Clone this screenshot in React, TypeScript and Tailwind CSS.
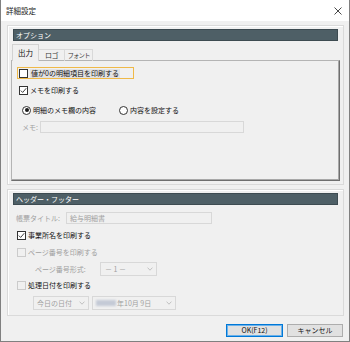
import React from 'react'

const Check = ({ checked = false, disabled = false }: { checked?: boolean; disabled?: boolean }) => (
  <span
    className={`w-[9px] h-[9px] border flex items-center justify-center shrink-0 ${
      disabled ? 'border-[#cbcbcb] bg-[#f0f0f0]' : 'border-[#333333] bg-white'
    }`}
  >
    {checked && (
      <svg viewBox="0 0 9 9" className="w-[7px] h-[7px]">
        <path d="M1 4.6 L3.4 7 L8 1.6" stroke="#222" fill="none" strokeWidth="1.1" />
      </svg>
    )}
  </span>
)

const Radio = ({ checked = false }: { checked?: boolean }) => (
  <span className="w-[9px] h-[9px] rounded-full border border-[#333333] bg-white flex items-center justify-center shrink-0">
    {checked && <span className="w-[4px] h-[4px] rounded-full bg-[#1a1a1a]" />}
  </span>
)

const Chevron = () => (
  <svg viewBox="0 0 7 5" className="w-[6px] h-[4px] shrink-0">
    <path d="M0.5 0.8 L3.5 4 L6.5 0.8" stroke="#b0b0b0" fill="none" strokeWidth="0.9" />
  </svg>
)

const Header = ({ title }: { title: string }) => (
  <div className="mx-[2px] h-[12px] bg-[#4e5f66] border border-[#3d4b51] flex items-center pl-[2px] text-white text-[7px] whitespace-nowrap">
    {title}
  </div>
)

export default function App() {
  return (
    <div className="w-[350px] h-[342px] flex flex-col bg-[#f0f0f0] border-x border-b border-[#808080] font-['Noto_Sans_CJK_JP','Noto_Sans',sans-serif] text-[7px] leading-none text-[#111] whitespace-nowrap overflow-hidden">
      {/* title bar */}
      <div className="h-[21px] bg-white flex items-center justify-between pl-[5px] pr-[7px] shrink-0">
        <span className="text-[7.5px] text-[#222]">詳細設定</span>
        <svg viewBox="0 0 8 8" className="w-[8px] h-[8px]">
          <path d="M0.5 0.5 L7.5 7.5 M7.5 0.5 L0.5 7.5" stroke="#333" strokeWidth="0.9" />
        </svg>
      </div>

      {/* options panel */}
      <div className="mt-[4px] ml-[6px] mr-[5px] h-[160px] border border-[#dadada] shadow-[inset_1px_1px_0_#ffffff] px-[3px] pt-[3px] flex flex-col">
        <Header title="オプション" />

        <div className="mt-[3px] ml-[1px] flex items-end relative z-10 -mb-[1px]">
          <div className="w-[27px] h-[17px] shrink-0 bg-[#f0f0f0] border border-b-0 border-[#d2d2d2] flex items-center justify-center text-[7.5px]">
            出力
          </div>
          <div className="w-[26px] h-[12px] shrink-0 border border-b-0 border-l-0 border-[#d9d9d9] flex items-center justify-center text-[#3a3a3a] tracking-[-0.5px]">
            ロゴ
          </div>
          <div className="w-[28px] h-[12px] shrink-0 border border-b-0 border-l-0 border-[#d9d9d9] flex items-center justify-center text-[#3a3a3a] text-[6.5px] tracking-[-1px]">
            フォント
          </div>
        </div>

        <div className="h-[121px] border border-[#b4b4b4] border-r-[#6e6e6e] border-b-[#6e6e6e] shadow-[inset_-1px_-1px_0_#a8a8a8] flex flex-col">
          <div className="mt-[6px] ml-[5px] w-[117px] h-[12px] border border-[#efb948] flex items-center pl-[1px] gap-[2px]">
            <Check />
            <span className="bg-[#e2e2e2] px-[1px] py-[1px]">値が0の明細項目を印刷する</span>
          </div>
          <div className="mt-[6px] ml-[7px] h-[10px] flex items-center gap-[2px]">
            <Check checked />
            <span>メモを印刷する</span>
          </div>
          <div className="mt-[10px] ml-[10px] h-[10px] flex items-center">
            <Radio checked />
            <span className="ml-[2px]">明細のメモ欄の内容</span>
            <span className="ml-[23px]">
              <Radio />
            </span>
            <span className="ml-[2px]">内容を設定する</span>
          </div>
          <div className="mt-[6px] ml-[10px] h-[12px] flex items-center">
            <span className="w-[18px] text-[#a0a0a0]">メモ:</span>
            <div className="w-[204px] h-[12px] border border-[#d8d8d8] bg-[#f0f0f0]" />
          </div>
        </div>
      </div>

      {/* header / footer panel */}
      <div className="mt-[4px] ml-[6px] mr-[5px] h-[127px] border border-[#dadada] shadow-[inset_1px_1px_0_#ffffff] px-[3px] pt-[3px] flex flex-col">
        <Header title="ヘッダー・フッター" />

        <div className="mt-[7px] ml-[5px] h-[12px] flex items-center">
          <span className="w-[50px] text-[#a0a0a0]">帳票タイトル:</span>
          <div className="w-[146px] h-[12px] border border-[#d8d8d8] bg-[#f0f0f0] flex items-center pl-[3px] text-[#a0a0a0]">
            給与明細書
          </div>
        </div>
        <div className="mt-[6px] ml-[6px] h-[10px] flex items-center gap-[2px]">
          <Check checked />
          <span>事業所名を印刷する</span>
        </div>
        <div className="mt-[7px] ml-[6px] h-[10px] flex items-center gap-[2px]">
          <Check disabled />
          <span className="text-[#a0a0a0]">ページ番号を印刷する</span>
        </div>
        <div className="mt-[5px] ml-[24px] h-[14px] flex items-center">
          <span className="w-[65px] text-[#a0a0a0]">ページ番号形式:</span>
          <div className="w-[57px] h-[14px] border border-[#d8d8d8] bg-[#f0f0f0] flex items-center justify-between pl-[4px] pr-[3px] text-[#a0a0a0]">
            <span>－ 1 －</span>
            <Chevron />
          </div>
        </div>
        <div className="mt-[4px] ml-[6px] h-[10px] flex items-center gap-[2px]">
          <Check disabled />
          <span>処理日付を印刷する</span>
        </div>
        <div className="mt-[6px] ml-[22px] h-[14px] flex items-center gap-[3px]">
          <div className="w-[56px] h-[14px] border border-[#d8d8d8] bg-[#f0f0f0] flex items-center justify-between pl-[3px] pr-[3px] text-[#a0a0a0]">
            <span>今日の日付</span>
            <Chevron />
          </div>
          <div className="w-[84px] h-[14px] border border-[#d8d8d8] bg-[#f0f0f0] flex items-center justify-between pl-[3px] pr-[3px] text-[#a0a0a0]">
            <span className="flex items-center">
              <span className="w-[20px] h-[6px] bg-[#c4cad6] blur-[1px] mr-[1px]" />
              年10月 9日
            </span>
            <Chevron />
          </div>
        </div>
      </div>

      {/* buttons */}
      <div className="mt-[8px] mr-[6px] flex justify-end gap-[4px]">
        <div className="w-[57px] h-[13px] border border-[#0078d7] bg-[#e1e1e1] shadow-[inset_0_0_0_1px_#6bb1ea] flex items-center justify-center">
          OK(F12)
        </div>
        <div className="w-[56px] h-[13px] border border-[#adadad] bg-[#e1e1e1] flex items-center justify-center">
          キャンセル
        </div>
      </div>
    </div>
  )
}
